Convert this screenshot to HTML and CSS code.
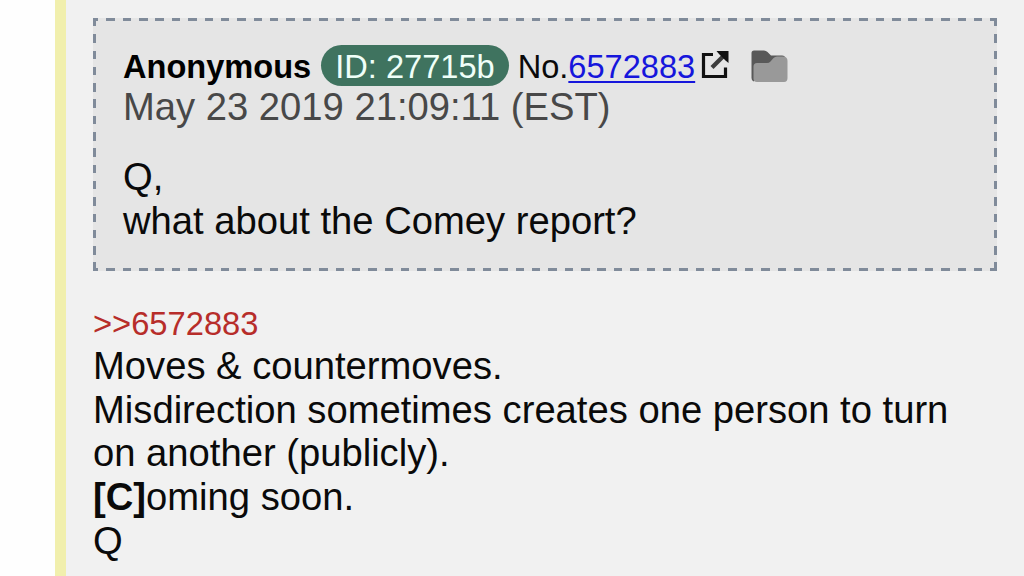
FILE: index.html
```
<!DOCTYPE html>
<html lang="en">

<head>
	<meta charset="utf-8">
	<title>Post</title>
	<link rel="stylesheet" href="styles.css">
</head>

<body>

	<div class="post">
		<div class="quoted">
			<div class="header">
				<strong class="name">Anonymous</strong>
				<span class="poster-id">ID: 27715b</span>
				<span class="number">No.<a href="#">6572883</a></span>
				<svg class="external" viewBox="0 0 28 28">
					<path d="M12 3.5H2.5V25.5H24.5V16.5" fill="none" stroke="#111" stroke-width="3.2" />
					<path d="M11 16.5L22 5.5" stroke="#3c3c3c" stroke-width="4.2" />
					<path d="M15.5 0H27.5V12L24.5 9.5L18 3Z" fill="#111" />
				</svg>
				<svg class="folder" viewBox="0 0 37 33">
					<path d="M3 0.5H13Q15 0.5 16.5 2L20 5.5H31Q34.5 5.5 34.5 9V29H5L2.5 31.5Q0.5 30.5 0.5 28V3Q0.5 0.5 3 0.5Z" fill="#595959" />
					<path d="M6 13H16Q18 13 19.5 11.5L22.5 8Q24 6.5 26 6.5H32Q36.5 6.5 36.5 11V28Q36.5 32 33 32H6Q2.5 32 2.5 28.5V16.5Q2.5 13 6 13Z" fill="#999" />
				</svg>
			</div>
			<div class="date">May 23 2019 21:09:11 (EST)</div>
			<div class="text">Q,<br>what about the Comey report?</div>
		</div>

		<a class="reference">&gt;&gt;6572883</a>
		<div class="text">
			Moves &amp; countermoves.<br>
			Misdirection sometimes creates one person to turn on another (publicly).<br>
			<b>[C]</b>oming soon.<br>
			Q
		</div>
	</div>

</body>

</html>
```
FILE: styles.css
```
body {
	margin: 0;
	height: 576px;
	overflow: hidden;
	background: #fefefe;
	font-family: "Liberation Sans", Arial, sans-serif;
	font-size: 38.2px;
	color: #0a0a0a;
}

.post {
	box-sizing: border-box;
	height: 576px;
	margin-left: 55px;
	padding: 18px 27px 0;
	border-left: 11px solid #f1efad;
	background: #f1f1f1;
}

/* long dashes, drawn as one strip for each side */
.quoted {
	--dash-x: repeating-linear-gradient(90deg, #808b9a 0 8.4px, transparent 8.4px 16.37px);
	--dash-y: repeating-linear-gradient(#808b9a 0 8.5px, transparent 8.5px 16.3px);
	box-sizing: border-box;
	width: 904px;
	height: 253px;
	padding: 26px 30px 0;
	background:
		var(--dash-x) -3px 0 / 907px 3px no-repeat,
		var(--dash-x) -3px 100% / 907px 3px no-repeat,
		var(--dash-y) 0 0 / 3px 100% no-repeat,
		var(--dash-y) 100% 0 / 3px 100% no-repeat,
		#e5e5e5;
}

.header {
	display: flex;
	align-items: center;
	height: 42px;
	font-size: 32.6px;
	white-space: nowrap;
}

.name,
.number {
	padding-top: 4px;
}

.name {
	color: #000;
}

.poster-id {
	height: 41px;
	margin: 0 9px 0 10px;
	padding: 0 14px;
	border-radius: 21px;
	background: #3f735f;
	color: #effff8;
	line-height: 43px;
}

.number a {
	color: #1616dc;
	text-decoration-thickness: 2px;
	text-underline-offset: 3px;
}

.external {
	width: 28px;
	height: 28px;
	margin: -1px 0 0 6px;
}

.folder {
	width: 37px;
	height: 33px;
	margin: 3px 0 0 22px;
}

.date {
	margin-bottom: 28px;
	color: #484848;
	line-height: 41px;
}

.text {
	line-height: 43.65px;
}

.reference {
	display: block;
	margin-top: 33px;
	color: #b72d2a;
	font-size: 32.7px;
	line-height: 40px;
}
```
